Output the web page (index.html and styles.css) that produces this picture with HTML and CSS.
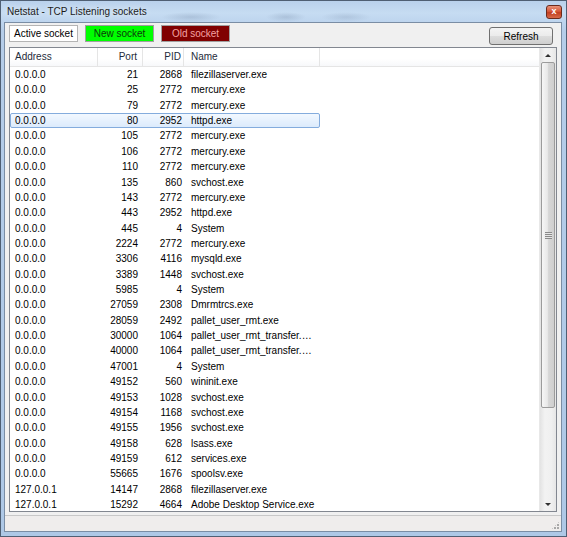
FILE: index.html
```html
<!DOCTYPE html>
<html>
<head>
    <meta charset="utf-8">
    <title>Netstat</title>
    <link rel="stylesheet" href="styles.css">
</head>
<body>
    <div id="window">
        <div id="titlebar">
            <span id="title">Netstat - TCP Listening sockets</span>
            <span id="close-btn">x</span>
        </div>
        <div id="client">
            <div id="toolbar">
                <span class="legend legend-active">Active socket</span>
                <span class="legend legend-new">New socket</span>
                <span class="legend legend-old">Old socket</span>
                <button id="refresh">Refresh</button>
            </div>
            <div id="listview">
                <div id="list">
                    <div class="row header">
                        <span class="col-address">Address</span>
                        <span class="col-num">Port</span>
                        <span class="col-num">PID</span>
                        <span class="col-name">Name</span>
                        <span class="col-fill"></span>
                    </div>
                    <div class="row"><span class="col-address">0.0.0.0</span><span class="col-num">21</span><span class="col-num">2868</span><span class="col-name">filezillaserver.exe</span></div>
                    <div class="row"><span class="col-address">0.0.0.0</span><span class="col-num">25</span><span class="col-num">2772</span><span class="col-name">mercury.exe</span></div>
                    <div class="row"><span class="col-address">0.0.0.0</span><span class="col-num">79</span><span class="col-num">2772</span><span class="col-name">mercury.exe</span></div>
                    <div class="row selected"><span class="col-address">0.0.0.0</span><span class="col-num">80</span><span class="col-num">2952</span><span class="col-name">httpd.exe</span></div>
                    <div class="row"><span class="col-address">0.0.0.0</span><span class="col-num">105</span><span class="col-num">2772</span><span class="col-name">mercury.exe</span></div>
                    <div class="row"><span class="col-address">0.0.0.0</span><span class="col-num">106</span><span class="col-num">2772</span><span class="col-name">mercury.exe</span></div>
                    <div class="row"><span class="col-address">0.0.0.0</span><span class="col-num">110</span><span class="col-num">2772</span><span class="col-name">mercury.exe</span></div>
                    <div class="row"><span class="col-address">0.0.0.0</span><span class="col-num">135</span><span class="col-num">860</span><span class="col-name">svchost.exe</span></div>
                    <div class="row"><span class="col-address">0.0.0.0</span><span class="col-num">143</span><span class="col-num">2772</span><span class="col-name">mercury.exe</span></div>
                    <div class="row"><span class="col-address">0.0.0.0</span><span class="col-num">443</span><span class="col-num">2952</span><span class="col-name">httpd.exe</span></div>
                    <div class="row"><span class="col-address">0.0.0.0</span><span class="col-num">445</span><span class="col-num">4</span><span class="col-name">System</span></div>
                    <div class="row"><span class="col-address">0.0.0.0</span><span class="col-num">2224</span><span class="col-num">2772</span><span class="col-name">mercury.exe</span></div>
                    <div class="row"><span class="col-address">0.0.0.0</span><span class="col-num">3306</span><span class="col-num">4116</span><span class="col-name">mysqld.exe</span></div>
                    <div class="row"><span class="col-address">0.0.0.0</span><span class="col-num">3389</span><span class="col-num">1448</span><span class="col-name">svchost.exe</span></div>
                    <div class="row"><span class="col-address">0.0.0.0</span><span class="col-num">5985</span><span class="col-num">4</span><span class="col-name">System</span></div>
                    <div class="row"><span class="col-address">0.0.0.0</span><span class="col-num">27059</span><span class="col-num">2308</span><span class="col-name">Dmrmtrcs.exe</span></div>
                    <div class="row"><span class="col-address">0.0.0.0</span><span class="col-num">28059</span><span class="col-num">2492</span><span class="col-name">pallet_user_rmt.exe</span></div>
                    <div class="row"><span class="col-address">0.0.0.0</span><span class="col-num">30000</span><span class="col-num">1064</span><span class="col-name">pallet_user_rmt_transfer.exe</span></div>
                    <div class="row"><span class="col-address">0.0.0.0</span><span class="col-num">40000</span><span class="col-num">1064</span><span class="col-name">pallet_user_rmt_transfer.exe</span></div>
                    <div class="row"><span class="col-address">0.0.0.0</span><span class="col-num">47001</span><span class="col-num">4</span><span class="col-name">System</span></div>
                    <div class="row"><span class="col-address">0.0.0.0</span><span class="col-num">49152</span><span class="col-num">560</span><span class="col-name">wininit.exe</span></div>
                    <div class="row"><span class="col-address">0.0.0.0</span><span class="col-num">49153</span><span class="col-num">1028</span><span class="col-name">svchost.exe</span></div>
                    <div class="row"><span class="col-address">0.0.0.0</span><span class="col-num">49154</span><span class="col-num">1168</span><span class="col-name">svchost.exe</span></div>
                    <div class="row"><span class="col-address">0.0.0.0</span><span class="col-num">49155</span><span class="col-num">1956</span><span class="col-name">svchost.exe</span></div>
                    <div class="row"><span class="col-address">0.0.0.0</span><span class="col-num">49158</span><span class="col-num">628</span><span class="col-name">lsass.exe</span></div>
                    <div class="row"><span class="col-address">0.0.0.0</span><span class="col-num">49159</span><span class="col-num">612</span><span class="col-name">services.exe</span></div>
                    <div class="row"><span class="col-address">0.0.0.0</span><span class="col-num">55665</span><span class="col-num">1676</span><span class="col-name">spoolsv.exe</span></div>
                    <div class="row"><span class="col-address">127.0.0.1</span><span class="col-num">14147</span><span class="col-num">2868</span><span class="col-name">filezillaserver.exe</span></div>
                    <div class="row"><span class="col-address">127.0.0.1</span><span class="col-num">15292</span><span class="col-num">4664</span><span class="col-name">Adobe Desktop Service.exe</span></div>
                </div>
                <div id="scrollbar">
                    <div class="scroll-arrow"><span class="arrow-up"></span></div>
                    <div class="scroll-thumb">
                        <span class="grip"></span>
                    </div>
                    <div class="scroll-track"></div>
                    <div class="scroll-arrow"><span class="arrow-down"></span></div>
                </div>
            </div>
            <div id="statusbar">
                <span id="grip-corner"></span>
            </div>
        </div>
    </div>
</body>
</html>
```

FILE: styles.css
```css
body{
    margin: 0;
    font-family: "Liberation Sans", Arial, sans-serif;
    font-size: 10px;
    color: #000;
}

#window{
    width: 567px;
    height: 537px;
    box-sizing: border-box;
    border: 1px solid #4f5f73;
    padding: 0px 4px 4px 3px;
    display: flex;
    flex-direction: column;
    background:
        radial-gradient(ellipse 30px 5px at 190px 16px, rgba(90, 110, 140, 0.22), transparent),
        radial-gradient(ellipse 20px 5px at 285px 16px, rgba(90, 110, 140, 0.22), transparent),
        radial-gradient(ellipse 25px 5px at 345px 16px, rgba(90, 110, 140, 0.18), transparent),
        linear-gradient(to bottom, #b9d1ec 0px, #c6dcf2 12px, #b5cde9 30px, #aec8e6 100%);
}

#titlebar{
    height: 21px;
    display: flex;
    align-items: center;
    justify-content: space-between;
    padding-left: 3px;
}

#title{
    font-size: 10px;
    color: #1b1b1b;
    text-shadow: 0 0 6px rgba(255, 255, 255, 0.9);
}

#close-btn{
    width: 16px;
    height: 14px;
    box-sizing: border-box;
    margin-top: 1px;
    border: 1px solid #6a2a1d;
    border-radius: 3px;
    background: linear-gradient(to bottom, #e8937a 0%, #d5583a 45%, #c23f20 55%, #d86a4a 100%);
    color: #fff;
    font-size: 9px;
    font-weight: bold;
    line-height: 11px;
    text-align: center;
}

#client{
    flex: 1;
    border: 1px solid #7a8da4;
    background-color: #f0f0f0;
    display: flex;
    flex-direction: column;
    min-height: 0;
}

#toolbar{
    display: flex;
    align-items: flex-start;
    padding: 2px 8px 0px 4px;
    height: 22px;
}

.legend{
    width: 69px;
    height: 17px;
    box-sizing: border-box;
    border: 1px solid #a0a0a0;
    line-height: 15px;
    text-align: center;
    margin-right: 7px;
}

.legend-active{
    background-color: #ffffff;
    border-color: #b4b4b4;
}

.legend-new{
    background-color: #00ff00;
    color: #0b3b0b;
}

.legend-old{
    background-color: #800000;
    color: #f4a2a2;
}

#refresh{
    margin-left: auto;
    margin-top: 2px;
    width: 64px;
    height: 18px;
    border: 1px solid #707070;
    border-radius: 3px;
    background: linear-gradient(to bottom, #f4f4f4 0%, #ebebeb 50%, #dddddd 51%, #cfcfcf 100%);
    font-family: "Liberation Sans", Arial, sans-serif;
    font-size: 10px;
    color: #000;
    padding: 0;
}

#listview{
    flex: 1;
    margin: 0px 4px 0px 4px;
    border: 1px solid #828790;
    background-color: #ffffff;
    display: flex;
    min-height: 0;
    overflow: hidden;
}

#list{
    flex: 1;
    overflow: hidden;
}

.row{
    display: grid;
    grid-template-columns: 88px 45px 41px 136px;
    height: 15.36px;
    line-height: 15.36px;
    white-space: nowrap;
}

.row span{
    overflow: hidden;
    text-overflow: ellipsis;
}

.col-address{
    padding-left: 5px;
}

.col-num{
    text-align: right;
    padding-right: 5px;
}

.col-num + .col-num{
    padding-right: 2px;
}

.col-name{
    padding-left: 7px;
    padding-right: 3px;
}

.header{
    grid-template-columns: 88px 45px 41px 136px 1fr;
    height: 18px;
    line-height: 18px;
    border-bottom: 1px solid #e5e5e5;
    background: linear-gradient(to bottom, #ffffff 0%, #ffffff 60%, #f7f8fa 100%);
    color: #1e2b3b;
}

.header span{
    border-right: 1px solid #e5e5e5;
}

.header .col-fill{
    border-right: none;
}

.selected{
    width: 310px;
    box-sizing: border-box;
    border: 1px solid #84acdd;
    border-radius: 2px;
    background: linear-gradient(to bottom, #f2f8ff 0%, #dcebfc 100%);
    line-height: 13.36px;
    grid-template-columns: 87px 45px 41px 135px;
}

.selected .col-address{
    padding-left: 4px;
}

#scrollbar{
    width: 16px;
    display: flex;
    flex-direction: column;
    align-items: center;
    background: linear-gradient(to right, #e3e3e3 0%, #f2f2f2 30%, #f0f0f0 70%, #e6e6e6 100%);
    border-left: 1px solid #e8e8e8;
}

.scroll-arrow{
    height: 14px;
    width: 16px;
    display: flex;
    align-items: center;
    justify-content: center;
}

.arrow-up{
    width: 0;
    height: 0;
    border-left: 3px solid transparent;
    border-right: 3px solid transparent;
    border-bottom: 3px solid #303030;
}

.arrow-down{
    width: 0;
    height: 0;
    border-left: 3px solid transparent;
    border-right: 3px solid transparent;
    border-top: 3px solid #303030;
}

.scroll-thumb{
    width: 14px;
    height: 346px;
    box-sizing: border-box;
    border: 1px solid #9b9b9b;
    border-radius: 2px;
    background: linear-gradient(to right, #f6f6f6 0%, #e8e8e8 45%, #d6d6d6 55%, #cfcfcf 100%);
    display: flex;
    align-items: center;
    justify-content: center;
}

.grip{
    width: 7px;
    height: 7px;
    background: repeating-linear-gradient(to bottom, #8a8a8a 0px, #8a8a8a 1px, #e6e6e6 1px, #e6e6e6 2px);
}

.scroll-track{
    flex: 1;
}

#statusbar{
    height: 15px;
    margin-top: 3px;
    border-top: 1px solid #c8c8c8;
    background-color: #efedec;
    position: relative;
}

#grip-corner{
    position: absolute;
    right: 1px;
    bottom: 1px;
    width: 9px;
    height: 9px;
    background:
        radial-gradient(circle at 1px 1px, #a8a8a8 1px, transparent 1.2px) 0 0 / 3px 3px;
    clip-path: polygon(100% 0, 100% 100%, 0 100%);
}
```
